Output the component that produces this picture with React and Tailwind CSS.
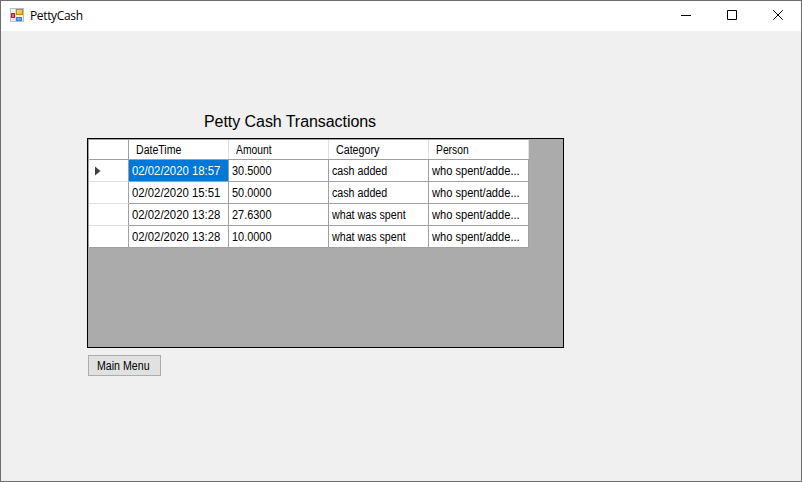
const rows = [
  ['02/02/2020 18:57', '30.5000', 'cash added', 'who spent/adde...'],
  ['02/02/2020 15:51', '50.0000', 'cash added', 'who spent/adde...'],
  ['02/02/2020 13:28', '27.6300', 'what was spent', 'who spent/adde...'],
  ['02/02/2020 13:28', '10.0000', 'what was spent', 'who spent/adde...'],
];

const headers = [
  ['DateTime', 'scale-x-[0.88]'],
  ['Amount', 'scale-x-[0.86]'],
  ['Category', 'scale-x-[0.89]'],
  ['Person', 'scale-x-[0.86]'],
];

const cellScale = ['scale-x-[0.945]', 'scale-x-[0.91]', 'scale-x-[0.89]', 'scale-x-[0.925]'];

function Condensed({ scale, children }) {
  return <span className={`inline-block origin-left whitespace-nowrap ${scale}`}>{children}</span>;
}

function FormIcon() {
  return (
    <svg width="14" height="14" viewBox="0 0 14 14" className="mb-[2px] shrink-0">
      <defs>
        <linearGradient id="gold" x1="0" y1="0" x2="1" y2="1">
          <stop offset="0" stopColor="#ffe9a0" />
          <stop offset="1" stopColor="#eba900" />
        </linearGradient>
      </defs>
      <rect x="0.5" y="0.5" width="13" height="13" fill="#f4f4f4" stroke="#b9bcc2" />
      <path d="M5.5 1V13M1 11.5H13" stroke="#d5d7db" />
      <rect x="1.5" y="5.5" width="3" height="4" fill="#e0685c" stroke="#b3201d" />
      <rect x="6.5" y="1.5" width="6" height="5" fill="url(#gold)" stroke="#c08a14" />
      <rect x="6.5" y="9.5" width="5" height="3" fill="#6aa5f2" stroke="#3f7fd8" />
    </svg>
  );
}

function TitleBar() {
  return (
    <header className="flex h-[30px] items-center bg-white pl-[9px]">
      <FormIcon />
      <span className="ml-[6px] font-['Open_Sans',sans-serif] text-[12px] leading-[16px] tracking-[-0.35px]">PettyCash</span>
      <div className="ml-auto flex h-full">
        {['M0 5.5H10', 'M0.5 0.5H9.5V9.5H0.5Z', 'M0.2 0.2L9.8 9.8M9.8 0.2L0.2 9.8'].map((d) => (
          <span key={d} className="flex w-[46px] items-center justify-center pb-[2px]">
            <svg width="10" height="10" viewBox="0 0 10 10" fill="none" stroke="#000">
              <path d={d} />
            </svg>
          </span>
        ))}
      </div>
    </header>
  );
}

function Grid() {
  return (
    <div className="h-[210px] w-[477px] border border-black bg-[#ababab] text-[12px]">
      <div className="w-[441px] border-l border-t border-[#a0a0a0]">
        <div className="flex h-[20px] w-[440px] border-b border-[#a0a0a0] bg-white">
          <div className="w-[40px] border-r border-[#a0a0a0]" />
          {headers.map(([name, scale]) => (
            <div key={name} className="w-[100px] border-r border-[#e0e0e0] pl-[7px] leading-[20px]">
              <Condensed scale={scale}>{name}</Condensed>
            </div>
          ))}
        </div>
        {rows.map((row, r) => (
          <div key={r} className="flex h-[22px] w-[440px] bg-white">
            <div
              className={`flex w-[40px] items-center border-b border-r border-r-[#a0a0a0] pl-[6px] ${r === 3 ? 'border-b-[#a0a0a0]' : 'border-b-[#e0e0e0]'}`}
            >
              {r === 0 && (
                <svg width="6" height="10" viewBox="0 0 6 10">
                  <path d="M0 0.5L5.5 5L0 9.5Z" fill="#404040" />
                </svg>
              )}
            </div>
            {row.map((cell, c) => (
              <div
                key={c}
                className={`h-[22px] w-[100px] border-b border-r border-[#a0a0a0] pl-[3px] leading-[22px] ${r === 0 && c === 0 ? 'bg-[#0078d7] text-white' : ''}`}
              >
                <Condensed scale={cellScale[c]}>{cell}</Condensed>
              </div>
            ))}
          </div>
        ))}
      </div>
    </div>
  );
}

export default function App() {
  return (
    <div className="flex h-[482px] w-[802px] flex-col border border-[#6e6e6e] bg-[#f0f0f0] font-['Liberation_Sans',Arial,sans-serif] text-black">
      <TitleBar />
      <main className="flex flex-col items-start pl-[86px] pt-[81px]">
        <h1 className="ml-[117px] h-[26px] text-[16px] leading-[20px] tracking-[-0.06px]">Petty Cash Transactions</h1>
        <Grid />
        <button className="ml-px mt-[7px] h-[21px] w-[73px] border border-[#adadad] bg-[#e1e1e1] pl-[8px] text-left text-[12px] leading-[20px]">
          <Condensed scale="scale-x-[0.885]">Main Menu</Condensed>
        </button>
      </main>
    </div>
  );
}
